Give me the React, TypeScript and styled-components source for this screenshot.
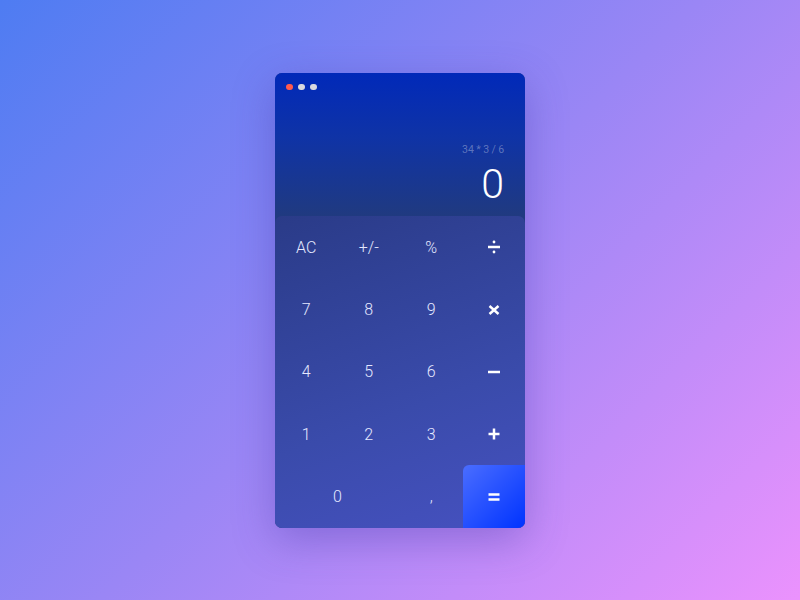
import React from "react";
import styled, { createGlobalStyle } from "styled-components";

const Global = createGlobalStyle`
  html, body { margin: 0; padding: 0; height: 100%; }
  body {
    font-family: Roboto, "Noto Sans", sans-serif;
    background: linear-gradient(135deg, #4e7cf2 0%, #9a86f5 50%, #eb92fd 100%);
    background-attachment: fixed;
  }
  #root { height: 100%; }
`;

const Page = styled.div`
  height: 600px;
  display: flex;
  align-items: center;
  justify-content: center;
`;

const Card = styled.div`
  width: 250px;
  height: 455px;
  border-radius: 7px;
  overflow: hidden;
  display: flex;
  flex-direction: column;
  background: #203a80;
  box-shadow: 0 12px 40px rgba(60, 50, 160, 0.35);
`;

const Screen = styled.div`
  height: 143px;
  box-sizing: border-box;
  padding: 11px 21px 10px 11px;
  display: flex;
  flex-direction: column;
  background: linear-gradient(180deg, #0129b9 0%, #0f33a6 45%, #203a80 100%);
`;

const Dots = styled.div`
  display: flex;
  gap: 5.5px;
`;

const Dot = styled.span<{ $color: string }>`
  width: 6.5px;
  height: 6.5px;
  border-radius: 50%;
  background: ${(p) => p.$color};
`;

const Expression = styled.div`
  margin-top: auto;
  text-align: right;
  font-size: 10.5px;
  font-weight: 400;
  letter-spacing: -0.1px;
  color: rgba(255, 255, 255, 0.32);
  line-height: 14px;
`;

const Result = styled.div`
  margin-top: 5px;
  text-align: right;
  font-size: 41px;
  font-weight: 300;
  color: #ffffff;
  line-height: 44px;
`;

const Keypad = styled.div`
  flex: 1;
  display: grid;
  grid-template-columns: repeat(4, 1fr);
  grid-template-rows: repeat(5, 1fr);
  border-radius: 7px 7px 0 0;
  background: linear-gradient(160deg, #2a3b88 0%, #3a4bab 60%, #4651c0 100%);
`;

const Key = styled.button<{ $span?: number; $accent?: boolean }>`
  border: none;
  background: ${(p) =>
    p.$accent ? "linear-gradient(135deg, #4a6dff 0%, #0033ff 100%)" : "transparent"};
  border-radius: ${(p) => (p.$accent ? "6px 0 0 0" : "0")};
  grid-column: span ${(p) => p.$span ?? 1};
  font-family: Roboto, "Noto Sans", sans-serif;
  font-size: 16px;
  font-weight: 300;
  color: #e4e8ff;
  display: flex;
  align-items: center;
  justify-content: center;
  padding: 1px 0 0;
  cursor: pointer;
`;

const OpIcon = styled.svg`
  width: 14px;
  height: 14px;
  display: block;
  stroke: #ffffff;
  fill: #ffffff;
  stroke-width: 2.5;
  stroke-linecap: butt;
`;

const Divide = () => (
  <OpIcon viewBox="0 0 14 14">
    <line x1="1" y1="7" x2="13" y2="7" />
    <circle cx="7" cy="2" r="1.4" stroke="none" />
    <circle cx="7" cy="12" r="1.4" stroke="none" />
  </OpIcon>
);
const Times = () => (
  <OpIcon viewBox="0 0 14 14">
    <line x1="2.5" y1="3" x2="11.5" y2="11" />
    <line x1="11.5" y1="3" x2="2.5" y2="11" />
  </OpIcon>
);
const Minus = () => (
  <OpIcon viewBox="0 0 14 14">
    <line x1="1" y1="7" x2="13" y2="7" />
  </OpIcon>
);
const Plus = () => (
  <OpIcon viewBox="0 0 14 14">
    <line x1="1.5" y1="7" x2="12.5" y2="7" />
    <line x1="7" y1="1.5" x2="7" y2="12.5" />
  </OpIcon>
);
const Equals = () => (
  <OpIcon viewBox="0 0 14 14">
    <line x1="1.5" y1="4.5" x2="12.5" y2="4.5" />
    <line x1="1.5" y1="9.5" x2="12.5" y2="9.5" />
  </OpIcon>
);

type K = { id: string; content: React.ReactNode; span?: number; accent?: boolean };

const keys: K[] = [
  { id: "ac", content: "AC" },
  { id: "pm", content: "+/-" },
  { id: "pct", content: "%" },
  { id: "div", content: <Divide /> },
  { id: "7", content: "7" },
  { id: "8", content: "8" },
  { id: "9", content: "9" },
  { id: "mul", content: <Times /> },
  { id: "4", content: "4" },
  { id: "5", content: "5" },
  { id: "6", content: "6" },
  { id: "sub", content: <Minus /> },
  { id: "1", content: "1" },
  { id: "2", content: "2" },
  { id: "3", content: "3" },
  { id: "add", content: <Plus /> },
  { id: "0", content: "0", span: 2 },
  { id: "comma", content: "," },
  { id: "eq", content: <Equals />, accent: true },
];

export default function App() {
  return (
    <>
      <Global />
      <Page>
        <Card>
          <Screen>
            <Dots>
              <Dot $color="#ff5a4e" />
              <Dot $color="#d9d9df" />
              <Dot $color="#d9d9df" />
            </Dots>
            <Expression>34 * 3 / 6</Expression>
            <Result>0</Result>
          </Screen>
          <Keypad>
            {keys.map((k) => (
              <Key key={k.id} $span={k.span} $accent={k.accent}>
                {k.content}
              </Key>
            ))}
          </Keypad>
        </Card>
      </Page>
    </>
  );
}
